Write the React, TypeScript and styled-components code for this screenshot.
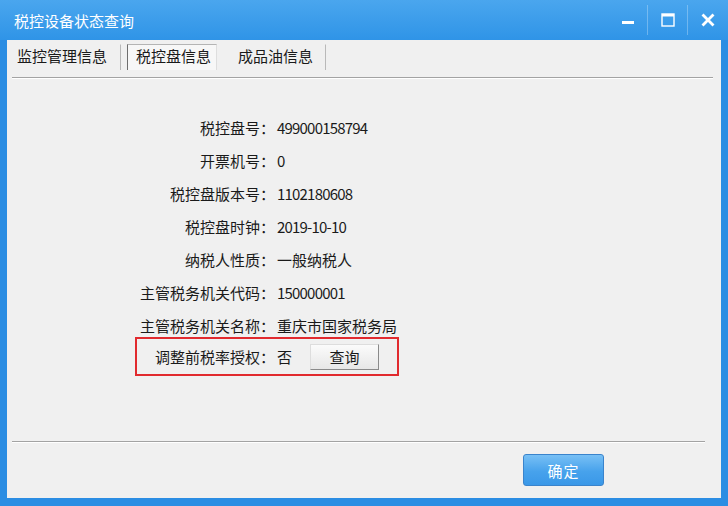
import styled, { createGlobalStyle } from 'styled-components';

const GlobalStyle = createGlobalStyle`
  html, body {
    margin: 0;
    padding: 0;
  }
  body {
    width: 728px;
    height: 506px;
    overflow: hidden;
    font-family: "Noto Sans CJK SC", "Noto Sans", sans-serif;
    background: #2a8de2;
  }
`;

const Frame = styled.div`
  width: 728px;
  height: 506px;
  display: flex;
  flex-direction: column;
  background: #2b8de3;
`;

const TitleBar = styled.div`
  height: 40px;
  flex-shrink: 0;
  display: flex;
  align-items: center;
  background: linear-gradient(#4aa6ee, #2f94e7);
`;

const Title = styled.div`
  padding-left: 14px;
  color: #fff;
  font-size: 15px;
`;

const Controls = styled.div`
  margin-left: auto;
  display: flex;
  padding-right: 1px;
`;

const CtrlButton = styled.div<{ $sep?: boolean }>`
  width: 40px;
  height: 30px;
  display: flex;
  align-items: center;
  justify-content: center;
  box-sizing: border-box;
  border-left: 1px solid ${(p) => (p.$sep ? 'rgba(255,255,255,0.28)' : 'transparent')};
`;

const Body = styled.div`
  flex: 1;
  display: flex;
  padding: 0 7px 8px 7px;
`;

const Client = styled.div`
  flex: 1;
  display: flex;
  flex-direction: column;
  background: #f0f0f0;
  color: #1a1a1a;
`;

const TabStrip = styled.div`
  height: 38px;
  box-sizing: border-box;
  margin: 0 8px 0 5px;
  padding-top: 4px;
  display: flex;
  align-items: flex-start;
  border-bottom: 1px solid #a3a3a3;
  box-shadow: 0 1px 0 #fff;
`;

const Tab = styled.div<{ $active?: boolean; $pl: number; $pr: number }>`
  height: 26px;
  line-height: 21px;
  box-sizing: border-box;
  font-size: 15px;
  padding: 0 ${(p) => p.$pr}px 0 ${(p) => p.$pl}px;
  margin-left: ${(p) => (p.$active ? 6 : 0)}px;
  background: ${(p) => (p.$active ? '#f7f7f7' : 'transparent')};
  border-top: 1px solid ${(p) => (p.$active ? '#b4b4b4' : 'transparent')};
  border-left: 1px solid ${(p) => (p.$active ? '#6e6e6e' : 'transparent')};
  border-right: 1px solid ${(p) => (p.$active ? '#dedede' : '#b9b9b9')};
`;

const Fields = styled.div`
  margin-top: 33px;
  display: flex;
  flex-direction: column;
`;

const Row = styled.div`
  height: 33px;
  display: flex;
  align-items: center;
`;

const Label = styled.div<{ $w: number }>`
  width: ${(p) => p.$w}px;
  flex-shrink: 0;
  text-align: right;
  font-size: 15px;
  white-space: nowrap;
`;

const Value = styled.div<{ $num?: boolean }>`
  margin-left: 2px;
  font-size: 15px;
  letter-spacing: ${(p) => (p.$num ? '-0.8px' : '0')};
  white-space: nowrap;
`;

const Highlight = styled.div`
  margin: -5px 0 0 128px;
  width: 264px;
  height: 39px;
  box-sizing: border-box;
  border: 2px solid #e12a2e;
  display: flex;
  align-items: center;
`;

const QueryButton = styled.button`
  margin-left: 18px;
  width: 69px;
  height: 26px;
  padding: 0;
  font-family: inherit;
  font-size: 15px;
  color: #1a1a1a;
  background: linear-gradient(#fbfbfb, #e7e7e7);
  border: 1px solid;
  border-color: #dddddd #8a8a8a #8a8a8a #dddddd;
  border-radius: 0;
`;

const Spacer = styled.div`
  flex: 1;
`;

const FooterLine = styled.div`
  margin: 0 16px 0 5px;
  border-top: 1px solid #a3a3a3;
  border-bottom: 1px solid #fff;
`;

const ButtonRow = styled.div`
  display: flex;
  justify-content: flex-end;
  padding: 11px 117px 12px 0;
`;

const OkButton = styled.button`
  width: 81px;
  height: 32px;
  padding: 0;
  border-radius: 3px;
  border: 1px solid #3a84cc;
  background: linear-gradient(#78c0f5, #47a2ec 55%, #3a98e8);
  color: #fff;
  font-family: inherit;
  font-size: 15px;
  letter-spacing: 1px;
`;

const fields: { label: string; value: string; num?: boolean }[] = [
  { label: '税控盘号：', value: '499000158794', num: true },
  { label: '开票机号：', value: '0', num: true },
  { label: '税控盘版本号：', value: '1102180608', num: true },
  { label: '税控盘时钟：', value: '2019-10-10', num: true },
  { label: '纳税人性质：', value: '一般纳税人' },
  { label: '主管税务机关代码：', value: '150000001', num: true },
  { label: '主管税务机关名称：', value: '重庆市国家税务局' },
];

export default function App() {
  return (
    <>
      <GlobalStyle />
      <Frame>
        <TitleBar>
          <Title>税控设备状态查询</Title>
          <Controls>
            <CtrlButton>
              <svg width="14" height="14" viewBox="0 0 14 14">
                <rect x="1" y="8" width="12" height="3" fill="#fff" />
              </svg>
            </CtrlButton>
            <CtrlButton $sep>
              <svg width="14" height="14" viewBox="0 0 14 14">
                <rect x="1" y="1" width="12" height="12" fill="none" stroke="#fff" strokeWidth="1.4" />
                <rect x="1" y="1" width="12" height="2.5" fill="#fff" />
              </svg>
            </CtrlButton>
            <CtrlButton $sep>
              <svg width="14" height="14" viewBox="0 0 14 14">
                <path d="M2.5 2.5 L11.5 11.5 M11.5 2.5 L2.5 11.5" stroke="#fff" strokeWidth="2.8" strokeLinecap="square" />
              </svg>
            </CtrlButton>
          </Controls>
        </TitleBar>
        <Body>
          <Client>
            <TabStrip>
              <Tab $pl={4} $pr={13}>监控管理信息</Tab>
              <Tab $active $pl={8} $pr={5}>税控盘信息</Tab>
              <Tab $pl={20} $pr={12}>成品油信息</Tab>
            </TabStrip>
            <Fields>
              {fields.map((f) => (
                <Row key={f.label}>
                  <Label $w={268}>{f.label}</Label>
                  <Value $num={f.num}>{f.value}</Value>
                </Row>
              ))}
              <Highlight>
                <Label $w={138}>调整前税率授权：</Label>
                <Value>否</Value>
                <QueryButton>查询</QueryButton>
              </Highlight>
            </Fields>
            <Spacer />
            <FooterLine />
            <ButtonRow>
              <OkButton>确定</OkButton>
            </ButtonRow>
          </Client>
        </Body>
      </Frame>
    </>
  );
}
